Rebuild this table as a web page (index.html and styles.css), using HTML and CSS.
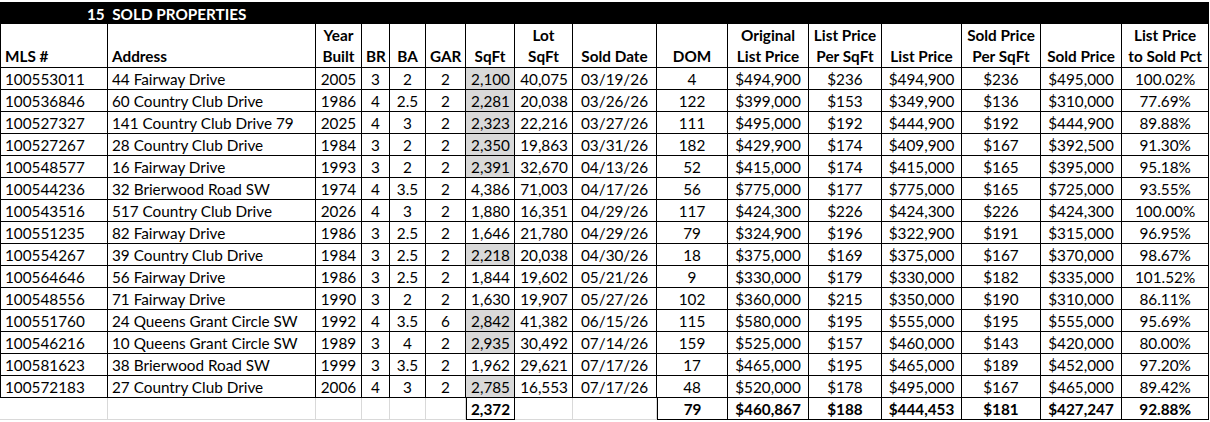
FILE: index.html
```html
<!DOCTYPE html>
<html>
<head>
<meta charset="utf-8">
<link rel="stylesheet" href="styles.css">
</head>
<body>
<table class="sheet">
  <colgroup>
    <col class="c-mls"><col class="c-addr"><col class="c-year"><col class="c-br"><col class="c-ba"><col class="c-gar"><col class="c-sqft"><col class="c-lot"><col class="c-date"><col class="c-dom"><col class="c-olp"><col class="c-lpsf"><col class="c-lp"><col class="c-spsf"><col class="c-sp"><col class="c-pct">
  </colgroup>
  <tr class="title-row"><td colspan="16" class="title">15&nbsp; SOLD PROPERTIES</td></tr>
  <tr class="head">
    <th class="l">MLS #</th><th class="l">Address</th><th>Year<br>Built</th><th>BR</th><th>BA</th><th>GAR</th><th>SqFt</th><th>Lot<br>SqFt</th><th>Sold Date</th><th>DOM</th><th>Original<br>List Price</th><th>List Price<br>Per SqFt</th><th>List Price</th><th>Sold Price<br>Per SqFt</th><th>Sold Price</th><th>List Price<br>to Sold Pct</th>
  </tr>
  <tr><td class="l">100553011</td><td class="l">44 Fairway Drive</td><td>2005</td><td>3</td><td>2</td><td>2</td><td class="r hl">2,100</td><td class="r">40,075</td><td>03/19/26</td><td>4</td><td>$494,900</td><td>$236</td><td>$494,900</td><td>$236</td><td>$495,000</td><td>100.02%</td></tr>
  <tr><td class="l">100536846</td><td class="l">60 Country Club Drive</td><td>1986</td><td>4</td><td>2.5</td><td>2</td><td class="r hl">2,281</td><td class="r">20,038</td><td>03/26/26</td><td>122</td><td>$399,000</td><td>$153</td><td>$349,900</td><td>$136</td><td>$310,000</td><td>77.69%</td></tr>
  <tr><td class="l">100527327</td><td class="l">141 Country Club Drive 79</td><td>2025</td><td>4</td><td>3</td><td>2</td><td class="r hl">2,323</td><td class="r">22,216</td><td>03/27/26</td><td>111</td><td>$495,000</td><td>$192</td><td>$444,900</td><td>$192</td><td>$444,900</td><td>89.88%</td></tr>
  <tr><td class="l">100527267</td><td class="l">28 Country Club Drive</td><td>1984</td><td>3</td><td>2</td><td>2</td><td class="r hl">2,350</td><td class="r">19,863</td><td>03/31/26</td><td>182</td><td>$429,900</td><td>$174</td><td>$409,900</td><td>$167</td><td>$392,500</td><td>91.30%</td></tr>
  <tr><td class="l">100548577</td><td class="l">16 Fairway Drive</td><td>1993</td><td>3</td><td>2</td><td>2</td><td class="r hl">2,391</td><td class="r">32,670</td><td>04/13/26</td><td>52</td><td>$415,000</td><td>$174</td><td>$415,000</td><td>$165</td><td>$395,000</td><td>95.18%</td></tr>
  <tr><td class="l">100544236</td><td class="l">32 Brierwood Road SW</td><td>1974</td><td>4</td><td>3.5</td><td>2</td><td class="r">4,386</td><td class="r">71,003</td><td>04/17/26</td><td>56</td><td>$775,000</td><td>$177</td><td>$775,000</td><td>$165</td><td>$725,000</td><td>93.55%</td></tr>
  <tr><td class="l">100543516</td><td class="l">517 Country Club Drive</td><td>2026</td><td>4</td><td>3</td><td>2</td><td class="r">1,880</td><td class="r">16,351</td><td>04/29/26</td><td>117</td><td>$424,300</td><td>$226</td><td>$424,300</td><td>$226</td><td>$424,300</td><td>100.00%</td></tr>
  <tr><td class="l">100551235</td><td class="l">82 Fairway Drive</td><td>1986</td><td>3</td><td>2.5</td><td>2</td><td class="r">1,646</td><td class="r">21,780</td><td>04/29/26</td><td>79</td><td>$324,900</td><td>$196</td><td>$322,900</td><td>$191</td><td>$315,000</td><td>96.95%</td></tr>
  <tr><td class="l">100554267</td><td class="l">39 Country Club Drive</td><td>1984</td><td>3</td><td>2.5</td><td>2</td><td class="r hl">2,218</td><td class="r">20,038</td><td>04/30/26</td><td>18</td><td>$375,000</td><td>$169</td><td>$375,000</td><td>$167</td><td>$370,000</td><td>98.67%</td></tr>
  <tr><td class="l">100564646</td><td class="l">56 Fairway Drive</td><td>1986</td><td>3</td><td>2.5</td><td>2</td><td class="r">1,844</td><td class="r">19,602</td><td>05/21/26</td><td>9</td><td>$330,000</td><td>$179</td><td>$330,000</td><td>$182</td><td>$335,000</td><td>101.52%</td></tr>
  <tr><td class="l">100548556</td><td class="l">71 Fairway Drive</td><td>1990</td><td>3</td><td>2</td><td>2</td><td class="r">1,630</td><td class="r">19,907</td><td>05/27/26</td><td>102</td><td>$360,000</td><td>$215</td><td>$350,000</td><td>$190</td><td>$310,000</td><td>86.11%</td></tr>
  <tr><td class="l">100551760</td><td class="l">24 Queens Grant Circle SW</td><td>1992</td><td>4</td><td>3.5</td><td>6</td><td class="r hl">2,842</td><td class="r">41,382</td><td>06/15/26</td><td>115</td><td>$580,000</td><td>$195</td><td>$555,000</td><td>$195</td><td>$555,000</td><td>95.69%</td></tr>
  <tr><td class="l">100546216</td><td class="l">10 Queens Grant Circle SW</td><td>1989</td><td>3</td><td>4</td><td>2</td><td class="r hl">2,935</td><td class="r">30,492</td><td>07/14/26</td><td>159</td><td>$525,000</td><td>$157</td><td>$460,000</td><td>$143</td><td>$420,000</td><td>80.00%</td></tr>
  <tr><td class="l">100581623</td><td class="l">38 Brierwood Road SW</td><td>1999</td><td>3</td><td>3.5</td><td>2</td><td class="r">1,962</td><td class="r">29,621</td><td>07/17/26</td><td>17</td><td>$465,000</td><td>$195</td><td>$465,000</td><td>$189</td><td>$452,000</td><td>97.20%</td></tr>
  <tr><td class="l">100572183</td><td class="l">27 Country Club Drive</td><td>2006</td><td>4</td><td>3</td><td>2</td><td class="r hl">2,785</td><td class="r">16,553</td><td>07/17/26</td><td>48</td><td>$520,000</td><td>$178</td><td>$495,000</td><td>$167</td><td>$465,000</td><td>89.42%</td></tr>
  <tr class="totals">
    <td class="e"></td><td class="e"></td><td class="e"></td><td class="e"></td><td class="e"></td><td class="e"></td><td class="r tot">2,372</td><td class="e"></td><td class="e"></td><td class="tot">79</td><td class="tot">$460,867</td><td class="tot">$188</td><td class="tot">$444,453</td><td class="tot">$181</td><td class="tot">$427,247</td><td class="tot">92.88%</td>
  </tr>
</table>
</body>
</html>
```

FILE: styles.css
```css
html, body {
  margin: 0;
  padding: 0;
  background: #fff;
}
body {
  padding-top: 2px;
  font-family: Lato, "Liberation Sans", sans-serif;
  font-size: 15.3px;
  color: #000;
}
.sheet {
  table-layout: fixed;
  border-collapse: separate;
  border-spacing: 0;
  width: 1209px;
}
.c-mls { width: 108px; }
.c-addr { width: 208px; }
.c-year { width: 46px; }
.c-br { width: 28px; }
.c-ba { width: 36px; }
.c-gar { width: 40px; }
.c-sqft { width: 49px; }
.c-lot { width: 58px; }
.c-date { width: 84px; }
.c-dom { width: 71px; }
.c-olp { width: 81px; }
.c-lpsf { width: 73px; }
.c-lp { width: 80px; }
.c-spsf { width: 79px; }
.c-sp { width: 81px; }
.c-pct { width: 87px; }

td, th {
  padding: 0 4px 2px 4px;
  text-align: center;
  vertical-align: bottom;
  white-space: nowrap;
  overflow: hidden;
  border-right: 1px solid #000;
  border-bottom: 1px solid #000;
  line-height: 16px;
  box-sizing: border-box;
}
tr > :first-child { border-left: 1px solid #000; }

.title-row td.title {
  height: 22px;
  background: #000;
  color: #fff;
  font-weight: 700;
  text-align: left;
  padding: 0 0 2px 87px;
  border: none;
  line-height: 16px;
  vertical-align: bottom;
}

.head th {
  height: 44px;
  font-weight: 700;
  line-height: 21px;
  padding-bottom: 0;
}
tr { height: 22px; }
.l { text-align: left; }
.r { text-align: right; }
.hl { background: #d9d9d9; }

.totals td { font-weight: 700; }
.totals td.e {
  border-left: none;
  border-right: 1px solid #d9d9d9;
  border-bottom: 1px solid #d9d9d9;
}
.totals td.tot {
  border-bottom: 1px solid #000;
  border-right: 1px solid #000;
}
.totals td.tot:nth-child(7) { border-left: 1px solid #000; }
.totals td.tot:nth-child(10) { border-left: 1px solid #000; }
```
